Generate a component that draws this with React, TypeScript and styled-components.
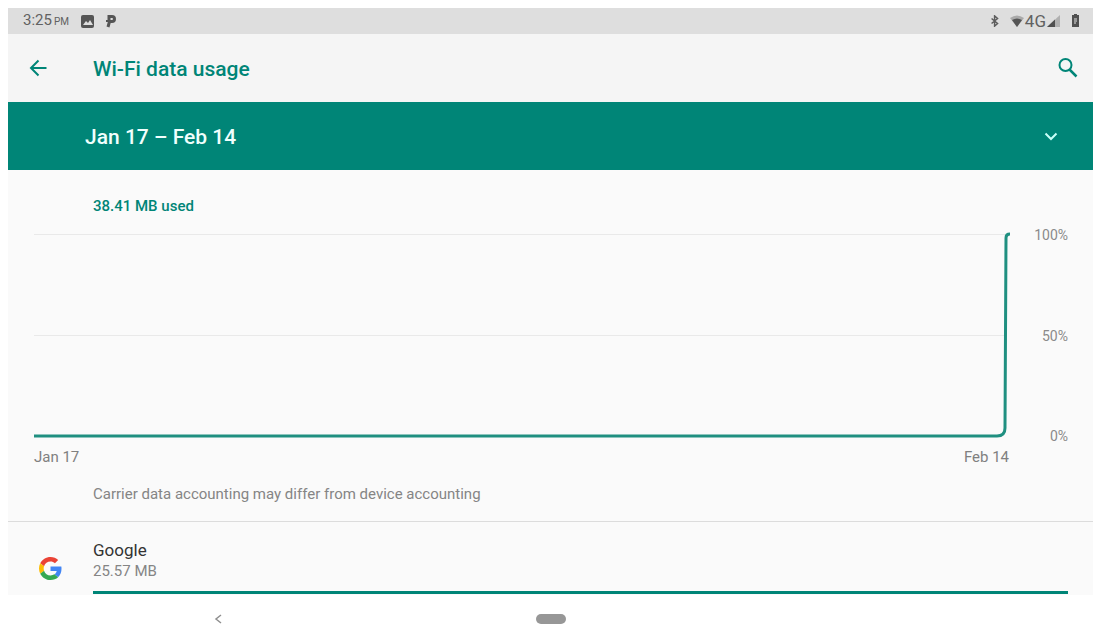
import React from "react";
import styled, { createGlobalStyle } from "styled-components";

const teal = "#008577";

const GlobalStyle = createGlobalStyle`
  *, *::before, *::after { box-sizing: border-box; }
  body {
    margin: 0;
    background: #fff;
    color: #333;
    font-family: Roboto, "Liberation Sans", sans-serif;
  }
`;

const Device = styled.div`
  padding: 8px 2px 0 8px;
`;

const StatusBar = styled.div`
  display: flex;
  justify-content: space-between;
  align-items: center;
  height: 26px;
  padding: 0 14px 0 15px;
  background: #dedede;
  color: #616161;
`;

const StatusGroup = styled.div<{ $gap: number }>`
  display: flex;
  align-items: center;
  gap: ${(p) => p.$gap}px;
`;

const Clock = styled.span`
  font-size: 15px;
  line-height: 20px;
`;

const Meridiem = styled.small`
  font-size: 10px;
  margin-left: 2px;
`;

const Network = styled.span`
  font-size: 17px;
  line-height: 20px;
`;

const AppBar = styled.header`
  display: flex;
  align-items: center;
  height: 68px;
  padding: 0 13px 0 18px;
  background: #f5f5f5;
`;

const IconButton = styled.button`
  display: flex;
  padding: 0;
  border: 0;
  background: none;
  color: ${teal};
  cursor: pointer;
`;

const Title = styled.h1`
  flex: 1;
  margin: 0 0 0 43px;
  padding-top: 2px;
  color: ${teal};
  font-size: 21px;
  line-height: 24px;
  font-weight: 500;
`;

const CycleBar = styled.div`
  display: grid;
  align-items: center;
  height: 68px;
  background: ${teal};
  color: #fff;

  & > * { grid-area: 1 / 1; }
  & > svg { justify-self: end; margin-right: 33px; pointer-events: none; }
`;

const CycleSelect = styled.select`
  appearance: none;
  width: 100%;
  height: 100%;
  padding: 2px 72px 0 77px;
  border: 0;
  border-radius: 0;
  background: ${teal};
  color: #f0fffd;
  font: 500 21px/24px Roboto, "Liberation Sans", sans-serif;
`;

const Content = styled.main`
  background: #fafafa;
`;

const Usage = styled.p`
  margin: 0;
  padding: 26px 0 18px 85px;
  color: ${teal};
  font-size: 15px;
  line-height: 20px;
  font-weight: 500;
`;

const ChartRow = styled.div`
  display: flex;
  height: 204px;
  padding: 0 25px 0 26px;
`;

const Plot = styled.svg`
  flex: 1;
  min-width: 0;
  height: 204px;
  overflow: visible;
`;

const Scale = styled.div`
  display: flex;
  flex-direction: column;
  justify-content: space-between;
  width: 58px;
  margin: -9px 0 -8px;
  color: #8a8a8a;
  font-size: 14px;
  line-height: 20px;
  text-align: right;
`;

const Dates = styled.div`
  display: flex;
  justify-content: space-between;
  padding: 9px 84px 0 26px;
  color: #808080;
  font-size: 15px;
  line-height: 20px;
`;

const Note = styled.p`
  margin: 0;
  padding: 17px 0;
  padding-left: 85px;
  color: #858585;
  font-size: 15px;
  line-height: 20px;
`;

const AppRow = styled.section`
  display: flex;
  padding: 17px 25px 0 31px;
  border-top: 1px solid #dcdcdc;
`;

const AppIcon = styled.svg`
  flex: none;
  margin: 18px 31px 0 0;
`;

const AppDetails = styled.div`
  flex: 1;
`;

const AppName = styled.h2`
  margin: 0;
  font-size: 17px;
  line-height: 22px;
  font-weight: 400;
`;

const AppSize = styled.div`
  color: #858585;
  font-size: 15px;
  line-height: 20px;
`;

const Bar = styled.div`
  height: 3px;
  margin: 10px 0 1px;
  background: ${teal};
`;

const NavBar = styled.nav`
  display: grid;
  grid-template-columns: 1fr auto 1fr;
  align-items: center;
  height: 36px;
  padding: 12px 0 0;
`;

const BackButton = styled(IconButton)`
  justify-self: start;
  margin-left: 39%;
  color: #8f8f8f;
`;

const HomeButton = styled.button`
  width: 30px;
  height: 10px;
  padding: 0;
  border: 0;
  border-radius: 5px;
  background: #979797;
`;

export default function App() {
  return (
    <>
      <GlobalStyle />
      <Device>
        <StatusBar>
          <StatusGroup $gap={12}>
            <Clock>3:25<Meridiem>PM</Meridiem></Clock>
            <svg width="13" height="13" viewBox="0 0 13 13" aria-hidden="true">
              <rect width="13" height="13" rx="2" fill="#555" />
              <path d="M2 10l3-4 2 2 2-3 3 5z" fill="#dedede" />
            </svg>
            <svg width="11" height="14" viewBox="0 0 11 14" fill="none" stroke="#555" strokeWidth="3" aria-hidden="true">
              <path d="M3 6.500V2.500h3a2.300 2.300 0 0 1 0 5H3.500L2 13" />
              <path d="M0 7h4" strokeWidth="2" />
            </svg>
          </StatusGroup>
          <StatusGroup $gap={1}>
            <svg width="10" height="12" viewBox="0 0 10 14" fill="none" stroke="#5c5c5c" strokeWidth="1.700" aria-hidden="true">
              <path d="M1 4l7 6-3.500 3V1L8 4l-7 6" />
            </svg>
            <svg width="23" height="12" viewBox="0 0 23 12" aria-hidden="true">
              <path d="M9 3Q16 -2 23 3L16 12z" fill="#aaa" />
              <path d="M11 5Q16 2 21 5L16 12z" fill="#555" />
            </svg>
            <Network>4G</Network>
            <svg width="13" height="12" viewBox="0 0 13 12" aria-hidden="true">
              <path d="M0 12L13 0V12z" fill="#b0b0b0" />
              <path d="M0 12L8 4.500V12z" fill="#505050" />
            </svg>
            <svg width="18" height="14" viewBox="0 0 18 14" aria-hidden="true">
              <path d="M11 1h2V0h3v1h2v12h-7V1z" fill="#505050" />
              <path d="M13 4h3v4h-1v2h-2z" fill="#999" />
            </svg>
          </StatusGroup>
        </StatusBar>

        <AppBar>
          <IconButton aria-label="Navigate up">
            <svg width="24" height="24" viewBox="0 0 24 24" fill="none" stroke="currentColor" strokeWidth="2" aria-hidden="true">
              <path d="M20.500 12H5M12.500 4.500L5 12l7.500 7.500" />
            </svg>
          </IconButton>
          <Title>Wi-Fi data usage</Title>
          <IconButton aria-label="Search">
            <svg width="24" height="24" viewBox="0 0 24 24" fill="none" stroke="currentColor" strokeWidth="2" aria-hidden="true">
              <circle cx="9.500" cy="9" r="6" />
              <path d="M13.500 13.500l7 7" strokeWidth="2.500" />
            </svg>
          </IconButton>
        </AppBar>

        <CycleBar>
          <CycleSelect aria-label="Usage cycle">
            <option>Jan 17 – Feb 14</option>
          </CycleSelect>
          <svg width="18" height="18" viewBox="0 0 18 18" fill="none" stroke="#c9fff8" strokeWidth="2" aria-hidden="true">
            <path d="M3.500 6.500L9 12l5.500-5.500" />
          </svg>
        </CycleBar>

        <Content>
          <Usage>38.41 MB used</Usage>
          <ChartRow>
            <Plot viewBox="0 0 976 204" preserveAspectRatio="none" fill="none" role="img" aria-label="Data usage over the cycle">
              <path d="M0 .5H976M0 101.500H970" stroke="#e9e9e9" />
              <path
                d="M0 202H963Q971 202 971 194L972 4Q972 0 976 0"
                stroke="#1f8f80"
                strokeWidth="3"
              />
            </Plot>
            <Scale>
              <span>100%</span>
              <span>50%</span>
              <span>0%</span>
            </Scale>
          </ChartRow>
          <Dates>
            <span>Jan 17</span>
            <span>Feb 14</span>
          </Dates>
          <Note>Carrier data accounting may differ from device accounting</Note>
          <AppRow>
            <AppIcon width="23" height="23" viewBox="0 0 48 48" aria-hidden="true">
              <path fill="#EA4335" d="M24 9.500c3.540 0 6.710 1.220 9.210 3.600l6.850-6.850C35.900 2.380 30.470 0 24 0 14.620 0 6.510 5.380 2.560 13.220l7.980 6.190C12.430 13.720 17.740 9.500 24 9.500z" />
              <path fill="#4285F4" d="M46.980 24.550c0-1.570-.15-3.090-.38-4.550H24v9.020h12.940c-.58 2.960-2.260 5.480-4.780 7.180l7.730 6c4.510-4.180 7.090-10.360 7.090-17.650z" />
              <path fill="#FBBC05" d="M10.530 28.590c-.48-1.450-.76-2.990-.76-4.590s.27-3.140.76-4.590l-7.980-6.190C.92 16.460 0 20.120 0 24c0 3.880.92 7.540 2.560 10.780l7.970-6.190z" />
              <path fill="#34A853" d="M24 48c6.480 0 11.930-2.130 15.890-5.810l-7.730-6c-2.150 1.450-4.920 2.300-8.160 2.300-6.260 0-11.570-4.220-13.470-9.910l-7.980 6.190C6.510 42.620 14.620 48 24 48z" />
            </AppIcon>
            <AppDetails>
              <AppName>Google</AppName>
              <AppSize>25.57 MB</AppSize>
              <Bar />
            </AppDetails>
          </AppRow>
        </Content>

        <NavBar aria-label="System navigation">
          <BackButton aria-label="Back">
            <svg width="8" height="10" viewBox="0 0 8 10" fill="none" stroke="currentColor" strokeWidth="1.500" aria-hidden="true">
              <path d="M7 1L2 5l5 4" />
            </svg>
          </BackButton>
          <HomeButton aria-label="Home" />
          <span />
        </NavBar>
      </Device>
    </>
  );
}
